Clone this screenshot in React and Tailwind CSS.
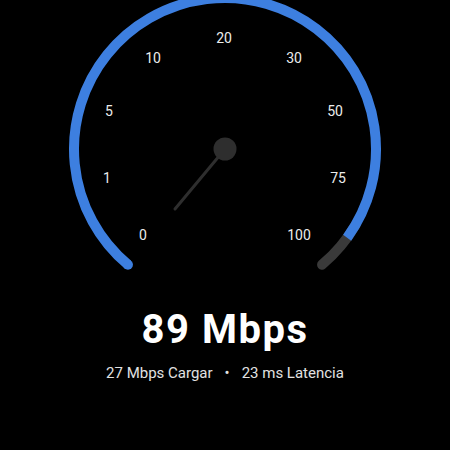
import React from 'react';

// gauge geometry (px, in svg coords)
const CX = 225;
const CY = 149;
const R = 151;

const pt = (deg) => {
  const a = (deg * Math.PI) / 180;
  return [CX + R * Math.sin(a), CY - R * Math.cos(a)];
};

const arc = (from, to) => {
  const [x1, y1] = pt(from);
  const [x2, y2] = pt(to);
  const large = to - from > 180 ? 1 : 0;
  return `M ${x1} ${y1} A ${R} ${R} 0 ${large} 1 ${x2} ${y2}`;
};

const LABELS = [
  { t: '0', x: 143, y: 240 },
  { t: '1', x: 107, y: 183 },
  { t: '5', x: 109, y: 116 },
  { t: '10', x: 153, y: 63 },
  { t: '20', x: 224, y: 43 },
  { t: '30', x: 294, y: 63 },
  { t: '50', x: 335, y: 116 },
  { t: '75', x: 338, y: 183 },
  { t: '100', x: 299, y: 240 },
];

function Gauge() {
  const start = pt(-140);
  return (
    <svg width="450" height="290" viewBox="0 0 450 290" className="block">
      <path d={arc(120, 140)} fill="none" stroke="#3a3a3a" strokeWidth="10" strokeLinecap="round" />
      <path d={arc(-140, 126)} fill="none" stroke="#3d7fe0" strokeWidth="10" />
      <circle cx={start[0]} cy={start[1]} r="5" fill="#3d7fe0" />
      {LABELS.map((l) => (
        <text
          key={l.t}
          x={l.x}
          y={l.y}
          textAnchor="middle"
          fill="#ececec"
          fontSize="14"
          fontFamily="Roboto, sans-serif"
        >
          {l.t}
        </text>
      ))}
      <line x1={CX} y1={CY} x2="175" y2="209" stroke="#2e2e2e" strokeWidth="3" strokeLinecap="round" />
      <circle cx={CX} cy={CY} r="11.5" fill="#2e2e2e" />
    </svg>
  );
}

export default function App() {
  return (
    <div className="w-[450px] h-[450px] bg-black overflow-hidden flex flex-col items-center font-['Roboto',sans-serif]">
      <Gauge />
      <div className="mt-5 text-[40px] leading-none font-bold text-white tracking-[1.5px]">89 Mbps</div>
      <div className="mt-4 flex items-center gap-3 text-[15px] leading-none text-[#e2e2e2]">
        <span>27 Mbps Cargar</span>
        <span>•</span>
        <span>23 ms Latencia</span>
      </div>
    </div>
  );
}
